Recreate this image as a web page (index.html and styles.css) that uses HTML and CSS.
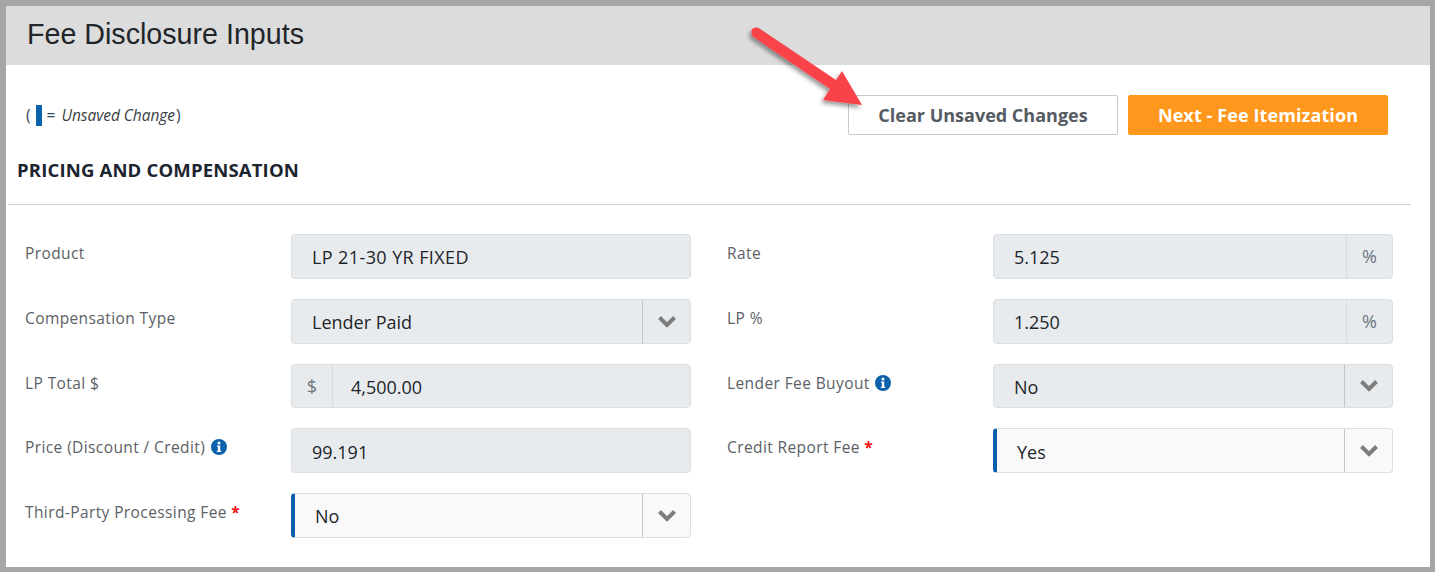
FILE: index.html
```html
<!DOCTYPE html>
<html lang="en">
<head>
<meta charset="utf-8">
<title>Fee Disclosure Inputs</title>
<link rel="stylesheet" href="styles.css">
</head>
<body>
<div class="frame">
  <header class="title-bar"><h1>Fee Disclosure Inputs</h1></header>
  <div class="toolbar">
    <div class="legend">(<span class="legend-mark"></span>= <em>Unsaved Change</em>)</div>
    <div class="actions">
      <button class="btn btn-clear">Clear Unsaved Changes</button>
      <button class="btn btn-next">Next - Fee Itemization</button>
    </div>
  </div>
  <h2 class="section-title">PRICING AND COMPENSATION</h2>
  <hr class="rule">
  <div class="form-grid">
    <label class="field-label">Product</label>
    <div class="control"><span class="value value-caps">LP 21-30 YR FIXED</span></div>
    <label class="field-label">Rate</label>
    <div class="control"><span class="value">5.125</span><span class="addon addon-right">%</span></div>

    <label class="field-label">Compensation Type</label>
    <div class="control"><span class="value">Lender Paid</span><span class="addon addon-select"><svg class="chevron" viewBox="0 0 20 13"><path d="M2.5 2.5 10 10l7.500-7.500"/></svg></span></div>
    <label class="field-label">LP %</label>
    <div class="control"><span class="value">1.250</span><span class="addon addon-right">%</span></div>

    <label class="field-label">LP Total $</label>
    <div class="control"><span class="addon addon-left">$</span><span class="value value-after">4,500.00</span></div>
    <label class="field-label">Lender Fee Buyout <svg class="info" viewBox="0 0 16 16"><circle cx="8" cy="8" r="8"/><circle class="glyph" cx="8" cy="3.900" r="1.500"/><path class="glyph" d="M5.900 6.500h3.300v5.200h1v1.300H5.900v-1.300h1V7.800h-1z"/></svg></label>
    <div class="control"><span class="value">No</span><span class="addon addon-select"><svg class="chevron" viewBox="0 0 20 13"><path d="M2.5 2.5 10 10l7.500-7.500"/></svg></span></div>

    <label class="field-label">Price (Discount / Credit) <svg class="info" viewBox="0 0 16 16"><circle cx="8" cy="8" r="8"/><circle class="glyph" cx="8" cy="3.900" r="1.500"/><path class="glyph" d="M5.900 6.500h3.300v5.200h1v1.300H5.900v-1.300h1V7.800h-1z"/></svg></label>
    <div class="control"><span class="value">99.191</span></div>
    <label class="field-label">Credit Report Fee <span class="req">*</span></label>
    <div class="control control-edit"><span class="value">Yes</span><span class="addon addon-select"><svg class="chevron" viewBox="0 0 20 13"><path d="M2.5 2.5 10 10l7.500-7.500"/></svg></span></div>

    <label class="field-label">Third-Party Processing Fee <span class="req">*</span></label>
    <div class="control control-edit"><span class="value">No</span><span class="addon addon-select"><svg class="chevron" viewBox="0 0 20 13"><path d="M2.500 2.500 10 10l7.500-7.500"/></svg></span></div>
  </div>
  <svg class="arrow" viewBox="0 0 125 95" width="125" height="95">
    <defs>
      <filter id="arrow-shadow" x="-20%" y="-20%" width="140%" height="140%">
        <feDropShadow dx="-2" dy="3" stdDeviation="2" flood-color="#000" flood-opacity=".4"/>
      </filter>
    </defs>
    <path class="arrow-shape" filter="url(#arrow-shadow)" d="M6.500 7.500C7.500 4.500 11.500 3.500 14.500 5.500L91 57L97 48L117 82L78 77L85 66L8.500 14C6.500 12.500 6 10 6.500 7.500Z"/>
  </svg>
</div>
</body>
</html>
```
FILE: styles.css
```css
* { box-sizing: border-box; }
html, body { margin: 0; padding: 0; }
body { width: 1435px; height: 572px; background: #fff; overflow: hidden; font-family: "Open Sans", "Noto Sans", sans-serif; }
.frame {
  position: relative;
  width: 1435px;
  height: 572px;
  border: solid #a6a6a6;
  border-width: 6px 5px 5px 6px;
  background: #fff;
  overflow: hidden;
}
.title-bar { height: 59px; background: #dcdcdc; padding-left: 21px; display: flex; align-items: center; }
.title-bar h1 { margin: 0 0 2px; font: 400 28.650px/1.2 "Liberation Sans", Arial, sans-serif; color: #212529; }
.toolbar { height: 40px; margin-top: 30px; display: flex; justify-content: space-between; align-items: center; padding: 0 42px 0 20px; }
.legend { font-size: 15.500px; color: #33475b; display: flex; align-items: center; }
.legend em { color: #3b3f44; letter-spacing: -.05px; margin-left: 6px; margin-right: 1px; }
.legend-mark { width: 6px; height: 21px; background: #0a62ad; margin: 0 5px 0 5px; }
.actions { display: flex; gap: 10px; }
.btn { height: 40px; font: 700 18px/1 "Open Sans", sans-serif; border-radius: 2px; padding: 0; }
.btn-clear { width: 270px; background: #fff; border: 1px solid #c9c9c9; color: #555b62; }
.btn-next { width: 260px; background: #ff971c; border: 1px solid #ff971c; color: #fff; letter-spacing: .1px; }
.section-title { margin: 23px 0 0 11px; font-size: 18.500px; line-height: 24px; font-weight: 700; color: #1c2430; letter-spacing: .17px; }
.rule { margin: 22px 19px 0 2px; border: 0; border-top: 1px solid #cfcfcf; height: 1px; }
.form-grid {
  margin: 29px 0 0 19px;
  display: grid;
  grid-template-columns: 266px 400px 302px 400px;
  grid-auto-rows: 44.750px;
  row-gap: 20px;
}
.form-grid > :nth-child(4n+3) { margin-left: 36px; }
.field-label { font-size: 15.500px; line-height: 20px; color: #5b6167; padding-top: 9px; white-space: nowrap; letter-spacing: .4px; }
.req { color: #f01515; font-weight: 700; }
.info { width: 16px; height: 16px; vertical-align: -2px; margin-left: 1px; }
.info circle { fill: #0a62ad; }
.info .glyph { fill: #fff; }
.control {
  display: flex;
  align-items: stretch;
  height: 100%;
  background: #e8ebee;
  border: 1px solid #dcdfe2;
  border-radius: 4px;
  overflow: hidden;
  font-size: 18px;
  color: #212529;
}
.control-edit { background: #f9f9f9; border-left: 4px solid #0a5fab; }
.value { flex: 1; display: flex; align-items: center; padding: 2px 0 0 20px; }
.value-caps { letter-spacing: .4px; }
.value-after { padding-left: 18px; }
.addon { display: flex; align-items: center; justify-content: center; color: #6c757d; }
.addon-right { width: 46px; border-left: 1px solid #d9dcdf; }
.addon-left { width: 41px; border-right: 1px solid #d9dcdf; }
.addon-select { width: 48px; border-left: 1px solid #c2c4c6; }
.chevron { width: 20px; height: 13px; fill: none; stroke: #7d7d7d; stroke-width: 4; }
.arrow { position: absolute; left: 739px; top: 17px; overflow: visible; }
.arrow-shape { fill: #fa4249; }
```
